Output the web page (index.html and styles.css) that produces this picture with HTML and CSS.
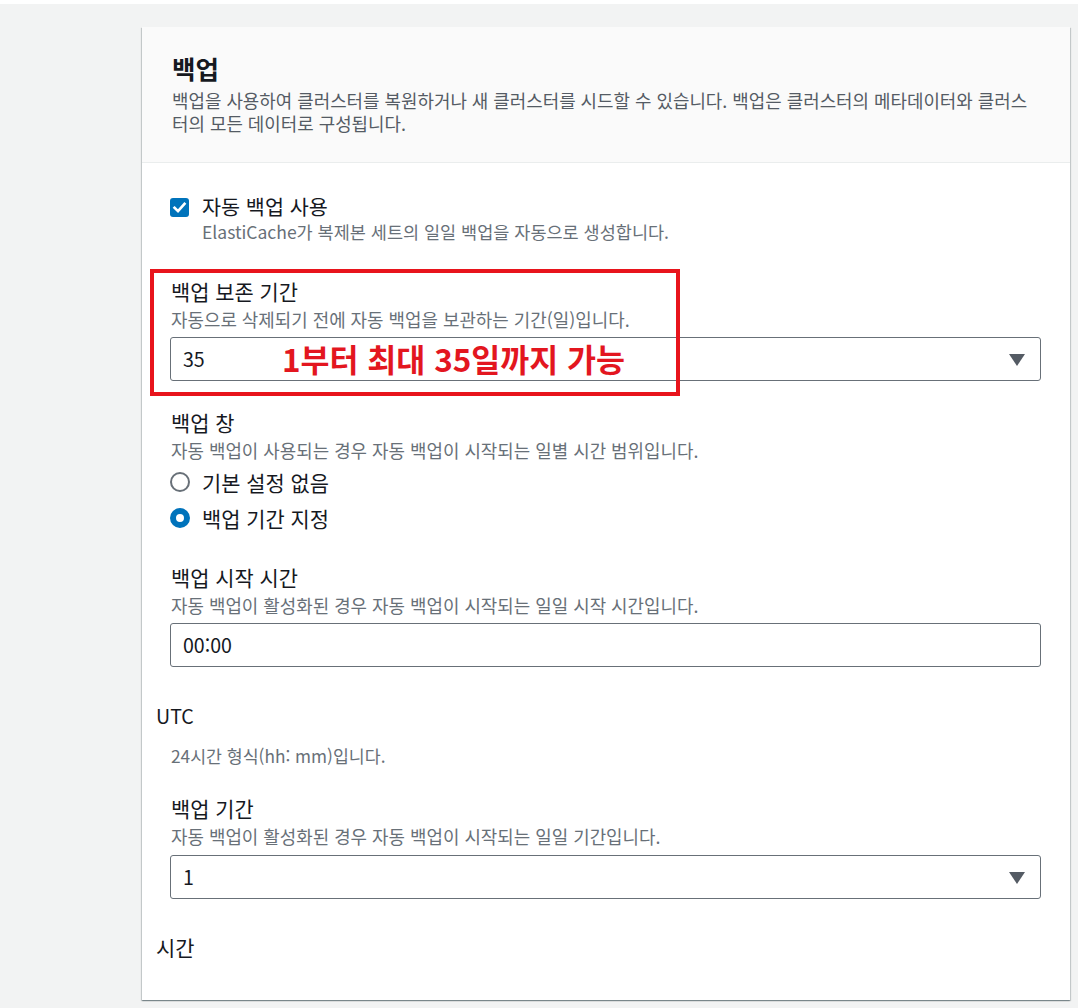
FILE: index.html
```html
<!DOCTYPE html>
<html lang="ko">
<head>
<meta charset="utf-8">
<title>백업</title>
<link rel="stylesheet" href="styles.css">
</head>
<body>
<div class="topstrip"></div>
<main class="page">
  <section class="card">
    <header class="card-header">
      <h2 class="title">백업</h2>
      <p class="header-desc">백업을 사용하여 클러스터를 복원하거나 새 클러스터를 시드할 수 있습니다. 백업은 클러스터의 메타데이터와 클러스터의 모든 데이터로 구성됩니다.</p>
    </header>
    <div class="card-body">
      <div class="check-row">
        <span class="checkbox">
          <svg width="19" height="19" viewBox="0 0 19 19"><rect x="0" y="0" width="19" height="19" rx="3" fill="#0073bb"/><path d="M4.5 9.8 L8 13.2 L14.5 5.8" fill="none" stroke="#fff" stroke-width="2.6" stroke-linecap="square"/></svg>
        </span>
        <div class="check-text">
          <div class="check-label">자동 백업 사용</div>
          <div class="desc check-desc">ElastiCache가 복제본 세트의 일일 백업을 자동으로 생성합니다.</div>
        </div>
      </div>

      <div class="field field-retention">
        <div class="label">백업 보존 기간</div>
        <div class="desc">자동으로 삭제되기 전에 자동 백업을 보관하는 기간(일)입니다.</div>
        <div class="control select"><span class="value">35</span><span class="caret"></span></div>
        <div class="note">1부터 최대 35일까지 가능</div>
        <div class="highlight"></div>
      </div>

      <div class="field field-window">
        <div class="label">백업 창</div>
        <div class="desc">자동 백업이 사용되는 경우 자동 백업이 시작되는 일별 시간 범위입니다.</div>
        <div class="radios">
          <div class="radio-row"><span class="radio"></span><span class="radio-label">기본 설정 없음</span></div>
          <div class="radio-row"><span class="radio checked"></span><span class="radio-label">백업 기간 지정</span></div>
        </div>
      </div>

      <div class="field field-start">
        <div class="label">백업 시작 시간</div>
        <div class="desc">자동 백업이 활성화된 경우 자동 백업이 시작되는 일일 시작 시간입니다.</div>
        <div class="control input"><span class="value">00:00</span></div>
      </div>

      <div class="unit unit-utc">UTC</div>
      <div class="desc hint">24시간 형식(hh: mm)입니다.</div>

      <div class="field field-duration">
        <div class="label">백업 기간</div>
        <div class="desc">자동 백업이 활성화된 경우 자동 백업이 시작되는 일일 기간입니다.</div>
        <div class="control select"><span class="value">1</span><span class="caret"></span></div>
      </div>

      <div class="unit unit-hours">시간</div>
    </div>
  </section>
</main>
</body>
</html>
```

FILE: styles.css
```css
* { box-sizing: border-box; }
html, body {
  margin: 0;
  padding: 0;
  background: #f2f3f3;
  font-family: "Noto Sans CJK KR", "Noto Sans", sans-serif;
  color: #16191f;
}
.topstrip {
  height: 4px;
  background: #ffffff;
}
.page {
  padding: 23px 8px 0 142px;
  height: 1004px;
}
.card {
  width: 928px;
  background: #ffffff;
  box-shadow: 0 1px 1px 0 rgba(0, 28, 36, 0.3), 1px 1px 1px 0 rgba(0, 28, 36, 0.15), -1px 1px 1px 0 rgba(0, 28, 36, 0.15);
}
.card-header {
  background: #fafafa;
  border-bottom: 1px solid #eaeded;
  padding: 25px 29px 28px 30px;
}
.title {
  margin: 0;
  font-size: 25.5px;
  line-height: 32px;
  font-weight: 700;
  color: #16191f;
}
.header-desc {
  margin: 5px 0 0 0;
  font-size: 17.9px;
  line-height: 22.5px;
  color: #545b64;
}
.card-body {
  padding: 31px 29px 41px 28px;
}
.desc {
  font-size: 17.9px;
  line-height: 22px;
  color: #687078;
}
.label {
  font-size: 20.9px;
  line-height: 24px;
  color: #16191f;
}
.check-row {
  display: flex;
  align-items: flex-start;
  gap: 13px;
}
.checkbox {
  display: block;
  width: 19px;
  height: 19px;
  margin-top: 4px;
  flex: none;
}
.checkbox svg { display: block; }
.check-label {
  font-size: 20.7px;
  line-height: 24px;
}
.check-desc {
  margin-top: 3px;
  font-size: 17.5px;
}
.field {
  position: relative;
  padding-left: 1px;
}
.field .desc { margin-top: 5px; }
.field-retention { margin-top: 36px; }
.field-window { margin-top: 29px; }
.field-start { margin-top: 29px; }
.field-duration { margin-top: 29px; }
.field-duration .control { margin-top: 8px; }
.control {
  margin-top: 7px;
  margin-left: -1px;
  height: 44px;
  border: 1px solid #687078;
  border-radius: 3px;
  display: flex;
  align-items: center;
  justify-content: space-between;
  padding: 0 15px 0 12px;
  background: #fff;
}
.control .value {
  font-size: 19.6px;
  line-height: 24px;
  color: #16191f;
}
.caret {
  width: 0;
  height: 0;
  border-left: 8px solid transparent;
  border-right: 8px solid transparent;
  border-top: 12px solid #545b64;
  margin-top: 2px;
}
.note {
  position: absolute;
  left: 112px;
  top: 61px;
  font-size: 31.5px;
  line-height: 36px;
  font-weight: 700;
  color: #e3161f;
  white-space: nowrap;
}
.highlight {
  position: absolute;
  left: -20px;
  top: -10px;
  width: 530px;
  height: 127px;
  border: 4px solid #e8141c;
  pointer-events: none;
}
.radios {
  margin-top: 3px;
}
.radio-row {
  display: flex;
  align-items: center;
  height: 36px;
  gap: 12px;
  margin-left: -1px;
}
.radio {
  width: 20px;
  height: 20px;
  border-radius: 50%;
  border: 2px solid #687078;
  flex: none;
  background: #fff;
}
.radio.checked {
  border: 6px solid #0073bb;
}
.radio-label {
  font-size: 20.9px;
  line-height: 24px;
}
.unit {
  font-size: 19.6px;
  line-height: 24px;
  margin-left: -14px;
  color: #16191f;
}
.unit-hours { font-size: 20.9px; margin-top: 36px; }
.unit-utc { margin-top: 37px; }
.hint {
  margin-top: 17px;
  padding-left: 1px;
  font-size: 17.3px;
}
```
